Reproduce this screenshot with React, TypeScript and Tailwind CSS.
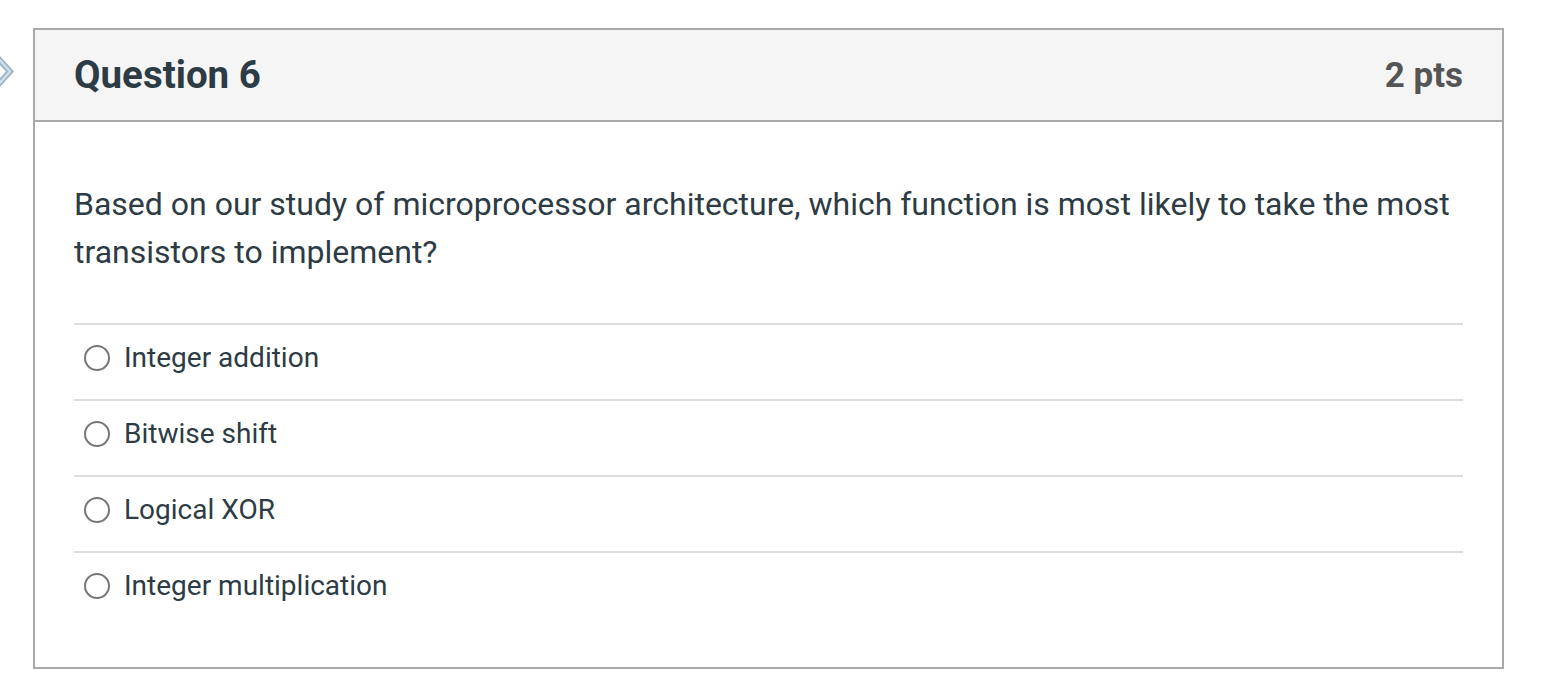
import React from "react";

const answers = ["Integer addition", "Bitwise shift", "Logical XOR", "Integer multiplication"];

export default function App() {
  return (
    <div className="relative w-[1550px] h-[696px] bg-white" style={{ fontFamily: "Roboto, 'Liberation Sans', sans-serif" }}>
      <svg className="absolute left-0 top-[54px]" width="16" height="36" viewBox="0 0 16 36">
        <polyline points="-4,2 10,17.5 -4,33" fill="none" stroke="#9cb3c5" strokeWidth="6" strokeLinejoin="miter" />
        <polyline points="-4,2 10,17.5 -4,33" fill="none" stroke="#d3dee7" strokeWidth="2.5" strokeLinejoin="miter" />
      </svg>
      <div className="pt-[28px] pl-[33px]">
        <div className="w-[1471px] h-[641px] border-2 border-[#a9a9a9] flex flex-col">
          <div className="h-[92px] bg-[#f5f5f5] border-b-2 border-[#a9a9a9] flex items-center justify-between pl-[39px] pr-[39px] shrink-0">
            <div className="text-[38.5px] font-bold text-[#2d3b45] leading-none">Question 6</div>
            <div className="text-[35px] font-bold text-[#555555] leading-none">2 pts</div>
          </div>
          <div className="pt-[58px] pl-[39px] pr-[39px]">
            <div className="text-[32px] leading-[48px] text-[#2d3b45]">
              Based on our study of microprocessor architecture, which function is most likely to take the most transistors to implement?
            </div>
            <div className="mt-[47px]">
              {answers.map((a) => (
                <div key={a} className="h-[76px] border-t-2 border-[#dddddd] flex items-start pl-[10px] pt-[18px]">
                  <div className="w-[26px] h-[26px] mt-[2px] rounded-full border-2 border-[#777777] bg-white shrink-0" />
                  <div className="ml-[14px] text-[28px] text-[#2d3b45] leading-[30px]">{a}</div>
                </div>
              ))}
            </div>
          </div>
        </div>
      </div>
    </div>
  );
}
